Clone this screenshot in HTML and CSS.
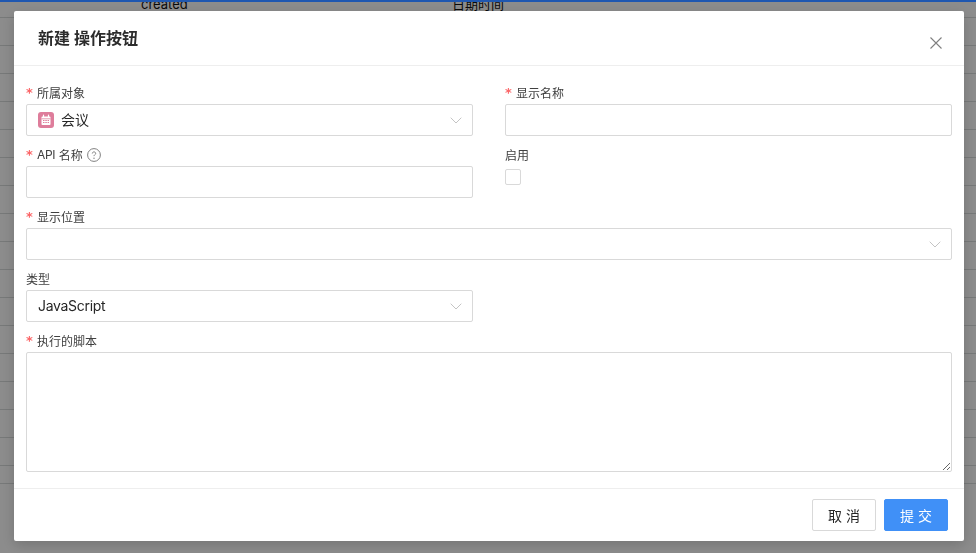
FILE: index.html
```html
<!DOCTYPE html>
<html lang="zh">
<head>
<meta charset="utf-8">
<title>新建 操作按钮</title>
<link rel="stylesheet" href="styles.css">
</head>
<body>
<div class="page">
  <div class="topbar"></div>
  <div class="table">
    <div class="row first"><span class="c1">created</span><span class="c2">日期时间</span></div>
    <div class="row"></div><div class="row"></div><div class="row"></div><div class="row"></div>
    <div class="row"></div><div class="row"></div><div class="row"></div><div class="row"></div>
    <div class="row"></div><div class="row"></div><div class="row"></div><div class="row"></div>
    <div class="row"></div><div class="row"></div><div class="row"></div><div class="row"></div>
    <div class="row short"></div>
  </div>
</div>
<div class="overlay"></div>
<div class="modal">
  <header class="modal-head">
    <h1 class="modal-title">新建 操作按钮</h1>
    <svg class="close" viewBox="0 0 12 12" width="12" height="12"><path d="M.5.5l11 11M11.5.5l-11 11" fill="none" stroke="#7f7f7f" stroke-width="1.100"/></svg>
  </header>
  <form class="modal-body">
    <div class="item">
      <label class="label"><span class="req">*</span>所属对象</label>
      <div class="field">
        <span class="obj-icon"><svg viewBox="0 0 16 16" width="16" height="16"><rect width="16" height="16" rx="3" fill="#de7d9b"/><path d="M3.500 5.200c0-.5.4-.8.8-.8h7.400c.4 0 .8.3.8.8v7c0 .4-.4.8-.8.8H4.300c-.4 0-.8-.4-.8-.8z" fill="#fff"/><path d="M5.500 3v2.500M10.500 3v2.500" stroke="#fff" stroke-width="1.200" stroke-linecap="round"/><path d="M3.500 6.800h9" stroke="#de7d9b" stroke-width=".8"/><path d="M5 8.500h6M5 10.500h6" stroke="#de7d9b" stroke-width="1" stroke-dasharray="1.500 .8"/></svg></span>
        <span class="value">会议</span>
        <svg class="chev" viewBox="0 0 12 7" width="12" height="7"><path d="M.7.7L6 6l5.300-5.300" fill="none" stroke="#c4c4c4"/></svg>
      </div>
    </div>
    <div class="item">
      <label class="label"><span class="req">*</span>显示名称</label>
      <div class="field"></div>
    </div>
    <div class="item">
      <label class="label"><span class="req">*</span><span class="latin">API</span>&nbsp;名称<svg class="help" viewBox="0 0 14 14" width="14" height="14"><circle cx="7" cy="7" r="6.400" fill="none" stroke="#808080" stroke-width="1"/><path d="M5.300 5.500c0-1 .8-1.600 1.700-1.600s1.700.6 1.700 1.500c0 1.200-1.700 1.300-1.700 2.700" fill="none" stroke="#808080" stroke-width="1"/><circle cx="7" cy="10.200" r=".7" fill="#808080"/></svg></label>
      <div class="field"></div>
    </div>
    <div class="item">
      <label class="label">启用</label>
      <span class="check"></span>
    </div>
    <div class="item wide">
      <label class="label"><span class="req">*</span>显示位置</label>
      <div class="field">
        <svg class="chev" viewBox="0 0 12 7" width="12" height="7"><path d="M.7.7L6 6l5.300-5.300" fill="none" stroke="#c4c4c4"/></svg>
      </div>
    </div>
    <div class="item">
      <label class="label">类型</label>
      <div class="field">
        <span class="value latin">JavaScript</span>
        <svg class="chev" viewBox="0 0 12 7" width="12" height="7"><path d="M.7.7L6 6l5.300-5.300" fill="none" stroke="#c4c4c4"/></svg>
      </div>
    </div>
    <div class="item wide last">
      <label class="label"><span class="req">*</span>执行的脚本</label>
      <textarea class="area"></textarea>
    </div>
  </form>
  <footer class="modal-foot">
    <button type="button" class="btn">取 消</button>
    <button type="button" class="btn primary">提 交</button>
  </footer>
</div>
</body>
</html>
```
FILE: styles.css
```css
* { box-sizing: border-box; }
html, body { margin: 0; height: 100%; overflow: hidden; }
body {
  font-family: Inter, "Noto Sans CJK SC", sans-serif;
  color: #262626;
  background: #fff;
}
.topbar { height: 1px; background: #1f5fd0; }
.table { display: flex; flex-direction: column; }
.row {
  height: 28px;
  border-bottom: 1px solid #d9dcdc;
  display: flex;
  font-size: 13px;
  line-height: 7px;
  color: #111;
}
.row.first { height: 17px; }
.row.short { height: 18px; }
.c1 { margin-left: 141px; width: 312px; }
.c2 { margin-left: -1px; }
.overlay {
  position: fixed;
  inset: 0;
  background: rgba(0, 0, 0, .45);
}
.overlay::before {
  content: "";
  position: absolute;
  left: 0; right: 0; top: 0;
  height: 2px;
  background: #1f57b0;
}
.modal {
  position: fixed;
  left: 14px;
  top: 11px;
  width: 950px;
  height: 530px;
  background: #fff;
  border-radius: 2px;
  box-shadow: 0 4px 14px rgba(0, 0, 0, .18);
  display: flex;
  flex-direction: column;
}
.modal-head {
  height: 55px;
  border-bottom: 1px solid #eeeeee;
  padding: 0 22px 0 24px;
  display: flex;
  align-items: center;
  justify-content: space-between;
  flex: none;
}
.modal-title {
  margin: 0 0 1px;
  font-size: 16px;
  font-weight: 600;
  color: #2c2c2c;
  line-height: 22px;
}
.close { margin-top: 10px; }
.modal-body {
  flex: 1;
  padding: 16px 12px 16px;
  display: grid;
  grid-template-columns: 447px 447px;
  column-gap: 32px;
  align-content: start;
  grid-auto-rows: min-content;
}
.item { margin-bottom: 8px; min-height: 54px; }
.item.wide { grid-column: 1 / 3; }
.item.last { margin-bottom: 0; }
.label {
  display: flex;
  align-items: center;
  height: 22px;
  font-size: 12px;
  color: #404040;
  padding-bottom: 2px;
}
.latin { letter-spacing: -.3px; }
.req {
  color: #fb6466;
  width: 11px;
  font-size: 13px;
  font-weight: 700;
  font-family: "DejaVu Sans", sans-serif;
  line-height: 14px;
  padding-top: 1px;
  flex: none;
}
.help { margin-left: 4px; margin-top: 1px; }
.field {
  height: 32px;
  border: 1px solid #d9d9d9;
  border-radius: 2px;
  background: #fff;
  display: flex;
  align-items: center;
  padding: 0 10px 0 11px;
}
.obj-icon { display: flex; margin-right: 7px; margin-top: -1px; }
.value { font-size: 14px; color: #262626; margin-top: -2px; }
.chev { margin-left: auto; flex: none; }
.check {
  display: block;
  width: 16px;
  height: 16px;
  border: 1px solid #d9d9d9;
  border-radius: 2px;
  margin-top: 3px;
}
.area {
  display: block;
  width: 100%;
  height: 120px;
  border: 1px solid #d9d9d9;
  border-radius: 2px;
  outline: none;
  background: #fff;
  padding: 4px 11px;
  margin: 0;
}
.modal-foot {
  height: 53px;
  flex: none;
  border-top: 1px solid #eeeeee;
  padding: 10px 16px 0;
  display: flex;
  justify-content: flex-end;
  align-items: flex-start;
  gap: 8px;
}
.btn {
  width: 64px;
  height: 32px;
  border: 1px solid #d9d9d9;
  border-radius: 2px;
  background: #fff;
  color: #262626;
  font: 14px Inter, "Noto Sans CJK SC", sans-serif;
  padding: 0;
}
.btn.primary {
  background: #4090f7;
  border-color: #4090f7;
  color: #fff;
}
```
